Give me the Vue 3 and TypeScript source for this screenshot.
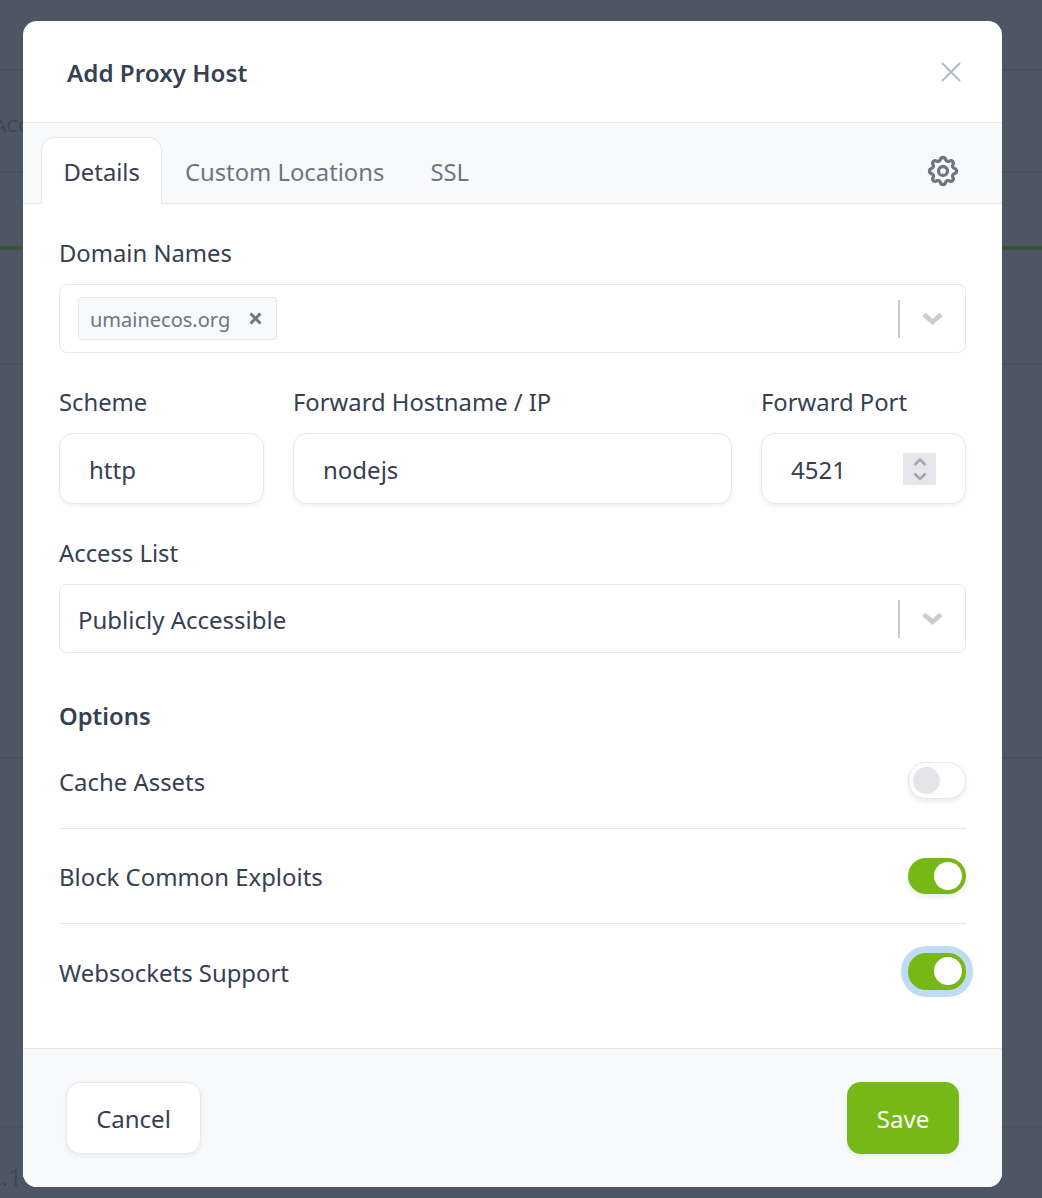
<script setup lang="ts">
const bgLines: number[] = [71, 102, 77, 115, 394, 369]
const chevron = 'M2 2.5 L10.5 10 L19 2.5'
const options = [
  { label: 'Cache Assets', state: 'off' },
  { label: 'Block Common Exploits', state: 'on' },
  { label: 'Websockets Support', state: 'focus' },
]
</script>

<template>
  <div class="page">
    <div class="backdrop">
      <div v-for="(h, i) in bgLines" :key="i" class="bg-row" :class="{ green: i === 2 }" :style="{ height: h + 'px' }"></div>
      <span class="bg-text acc">ACC</span>
      <span class="bg-text ver">2.1</span>
    </div>
    <div class="modal">
      <header class="head">
        <h1>Add Proxy Host</h1>
        <svg class="close" viewBox="0 0 20 20" width="20" height="20"><path d="M1 1 L19 19 M19 1 L1 19" /></svg>
      </header>
      <nav class="tabs">
        <a class="tab active">Details</a>
        <a class="tab">Custom Locations</a>
        <a class="tab">SSL</a>
        <svg class="gear" viewBox="0 0 24 24" width="36" height="36">
          <path d="M10.325 4.317c.426 -1.756 2.924 -1.756 3.35 0a1.724 1.724 0 0 0 2.573 1.066c1.543 -.94 3.31 .826 2.37 2.37a1.724 1.724 0 0 0 1.065 2.572c1.756 .426 1.756 2.924 0 3.35a1.724 1.724 0 0 0 -1.066 2.573c.94 1.543 -.826 3.31 -2.37 2.37a1.724 1.724 0 0 0 -2.572 1.065c-.426 1.756 -2.924 1.756 -3.35 0a1.724 1.724 0 0 0 -2.573 -1.066c-1.543 .94 -3.31 -.826 -2.37 -2.37a1.724 1.724 0 0 0 -1.065 -2.572c-1.756 -.426 -1.756 -2.924 0 -3.35a1.724 1.724 0 0 0 1.066 -2.573c-.94 -1.543 .826 -3.31 2.37 -2.37c1 .608 2.296 .07 2.572 -1.065z" />
          <circle cx="12" cy="12" r="3" />
        </svg>
      </nav>
      <main class="body">
        <label class="lbl">Domain Names</label>
        <div class="select">
          <span class="tag"><span class="tag-text">umainecos.org</span><svg class="tag-x" viewBox="0 0 13 13" width="13" height="13"><path d="M1.5 1.5 L11.5 11.5 M11.5 1.5 L1.5 11.5" /></svg></span>
          <span class="sep"></span>
          <svg class="chev" viewBox="0 0 21 13" width="21" height="13"><path :d="chevron" /></svg>
        </div>
        <div class="triple">
          <div>
            <label class="lbl">Scheme</label>
            <div class="input"><span class="txt">http</span></div>
          </div>
          <div>
            <label class="lbl">Forward Hostname / IP</label>
            <div class="input"><span class="txt">nodejs</span></div>
          </div>
          <div>
            <label class="lbl">Forward Port</label>
            <div class="input port">
              <span class="txt">4521</span>
              <span class="spin">
                <svg viewBox="0 0 14 26" width="14" height="26"><path d="M1.5 9 L7 3.5 L12.5 9 M1.5 17.5 L7 23 L12.5 17.5" /></svg>
              </span>
            </div>
          </div>
        </div>
        <label class="lbl access">Access List</label>
        <div class="select">
          <span class="value txt">Publicly Accessible</span>
          <span class="sep"></span>
          <svg class="chev" viewBox="0 0 21 13" width="21" height="13"><path :d="chevron" /></svg>
        </div>
        <h2>Options</h2>
        <div class="opts">
          <div v-for="o in options" :key="o.label" class="opt">
            <span>{{ o.label }}</span>
            <span class="toggle" :class="o.state"><i></i></span>
          </div>
        </div>
      </main>
      <footer class="foot">
        <button class="btn cancel">Cancel</button>
        <button class="btn save">Save</button>
      </footer>
    </div>
  </div>
</template>

<style>
html, body { margin: 0; background: #4f5663; }
</style>

<style scoped>
.page {
  position: relative;
  width: 1042px;
  height: 1198px;
  overflow: hidden;
  background: #4f5663;
  padding: 21px 40px 11px 23px;
  box-sizing: border-box;
  font-family: "Noto Sans", sans-serif;
  color: #354052;
}
.backdrop { position: absolute; inset: 0; }
.bg-row { box-sizing: border-box; border-bottom: 2px solid #4a515d; }
.bg-row.green { border-bottom: 4px solid #3c5238; }
.bg-text { position: absolute; color: #3f4653; font-size: 24px; }
.acc { left: -5px; top: 114px; font-size: 17px; letter-spacing: 1px; font-weight: 500; }
.ver { left: -12px; top: 1160px; }
.modal {
  position: relative;
  height: 1166px;
  background: #fff;
  border-radius: 14px;
  overflow: hidden;
  display: flex;
  flex-direction: column;
}
.head {
  height: 102px;
  flex: none;
  box-sizing: border-box;
  padding: 0 41px 0 44px;
  display: flex;
  align-items: center;
  justify-content: space-between;
  border-bottom: 1px solid #e6e8ec;
}
h1 { margin: 0; padding-top: 1px; font-size: 24.2px; font-weight: 600; color: #354052; }
.close path { stroke: #b6b9c0; stroke-width: 2; fill: none; }
.tabs {
  height: 81px;
  flex: none;
  box-sizing: border-box;
  background: #f8f9fb;
  border-bottom: 1px solid #e6e8ec;
  padding: 14px 0 0 18px;
  display: flex;
  align-items: flex-end;
}
.tab {
  height: 67px;
  box-sizing: border-box;
  padding: 2px 22px 0;
  display: flex;
  align-items: center;
  font-size: 23.8px;
  color: #6e7582;
  border: 1px solid transparent;
  border-bottom: 0;
  margin-bottom: -1px;
}
.tab.active {
  padding-left: 21.5px;
  padding-right: 21px;
  color: #354052;
  background: #fff;
  border-color: #e6e8ec;
  border-radius: 14px 14px 0 0;
}
.gear { margin-left: auto; margin-right: 41px; align-self: center; margin-top: 2px; }
.gear path, .gear circle { fill: none; stroke: #6e7582; stroke-width: 2.2; }
.body { flex: 1; padding: 31px 36px 0; }
.lbl { display: block; font-size: 23.8px; line-height: 36px; margin-bottom: 13px; }
.select {
  height: 69px;
  box-sizing: border-box;
  border: 1px solid #e6e8ec;
  border-radius: 8px;
  display: flex;
  align-items: center;
  padding: 0 22px 0 18px;
}
.tag {
  height: 43px;
  box-sizing: border-box;
  background: #f8f9fb;
  border: 1px solid #e6e8ec;
  border-radius: 3px;
  padding: 0 14px 0 11px;
  display: flex;
  align-items: center;
  gap: 19px;
  font-size: 20px;
  color: #6e7582;
}
.tag-text { padding-top: 2px; }
.tag-x path { stroke: #6e7582; stroke-width: 3; fill: none; }
.value { font-size: 24px; }
.txt { padding-top: 2px; }
.sep { margin-left: auto; width: 2px; height: 38px; background: #ccc; margin-right: 22px; }
.chev path { stroke: #ccc; stroke-width: 4.6; fill: none; }
.triple {
  display: grid;
  grid-template-columns: 205px 1fr 205px;
  gap: 29px;
  margin-top: 31px;
}
.input {
  height: 71px;
  box-sizing: border-box;
  border: 1px solid #e6e8ec;
  border-radius: 14px;
  box-shadow: 0 2px 4px rgba(53, 64, 82, 0.08);
  display: flex;
  align-items: center;
  padding: 0 29px;
  font-size: 24px;
}
.port { justify-content: space-between; }
.spin {
  width: 33px;
  height: 32px;
  background: #e6e6eb;
  display: flex;
  align-items: center;
  justify-content: center;
}
.spin path { stroke: #a5a5b0; stroke-width: 2.6; fill: none; }
.access { margin-top: 31px; }
h2 { margin: 45px 0 0; font-size: 23.8px; line-height: 36px; font-weight: 600; }
.opts { margin-top: 1px; }
.opt {
  height: 95px;
  box-sizing: border-box;
  display: flex;
  align-items: center;
  justify-content: space-between;
  font-size: 23.9px;
  border-bottom: 1px solid #e6e8ec;
}
.opt:first-child { height: 94px; }
.opt:last-child { height: 97px; border-bottom: 0; }
.toggle {
  position: relative;
  width: 58px;
  height: 36px;
  box-sizing: border-box;
  border-radius: 18px;
  flex: none;
  box-shadow: 0 3px 5px rgba(53, 64, 82, 0.1);
}
.toggle i {
  position: absolute;
  top: 4px;
  width: 28px;
  height: 28px;
  border-radius: 50%;
}
.toggle.off { background: #fff; border: 1px solid #e6e8ec; margin-top: -3px; height: 37px; }
.toggle.off i { left: 4px; top: 4px; width: 27px; height: 27px; background: #e3e5e9; }
.toggle.on, .toggle.focus { background: #76b815; }
.toggle.on i, .toggle.focus i { left: 26px; background: #fff; }
.toggle.focus { box-shadow: 0 0 0 7px #c2dbf4; margin-top: -2px; height: 37px; }
.foot {
  height: 139px;
  flex: none;
  box-sizing: border-box;
  background: #f8f9fb;
  border-top: 1px solid #e6e8ec;
  padding: 33px 43px 0;
  display: flex;
  justify-content: space-between;
  align-items: flex-start;
}
.btn {
  font: inherit;
  font-size: 24px;
  height: 72px;
  border-radius: 14px;
  box-sizing: border-box;
  cursor: pointer;
}
.cancel {
  width: 135px;
  color: #354052;
  background: #fff;
  border: 1px solid #e6e8ec;
  box-shadow: 0 2px 4px rgba(53, 64, 82, 0.08);
}
.save {
  width: 112px;
  color: #fff;
  background: #76b815;
  border: 0;
  box-shadow: 0 2px 4px rgba(53, 64, 82, 0.08);
}
</style>
